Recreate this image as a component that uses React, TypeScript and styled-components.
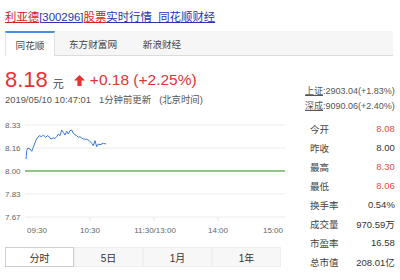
import React from "react";
import styled, { createGlobalStyle } from "styled-components";

const GlobalStyle = createGlobalStyle`
  body {
    margin: 0;
    background: #fff;
    font-family: "Liberation Sans", "Noto Sans CJK SC", sans-serif;
    color: #333;
  }
`;

const Page = styled.div`
  width: 400px;
  height: 280px;
  padding: 0 7px 0 5px;
  box-sizing: border-box;
  overflow: hidden;
`;

const Title = styled.div`
  padding-top: 8px;
  line-height: 18px;
  font-size: 11.4px;
  white-space: nowrap;
`;

const TitlePart = styled.span<{ $red?: boolean }>`
  color: ${(p) => (p.$red ? "#d42323" : "#2b32b8")};
  text-decoration: underline;
`;

const TabBar = styled.div`
  margin-top: 5px;
  height: 24px;
  display: flex;
  background: #f6f6f6;
  border-bottom: 1px solid #dcdcdc;
`;

const Tab = styled.div<{ $active?: boolean; $w: number }>`
  width: ${(p) => p.$w}px;
  box-sizing: border-box;
  display: flex;
  align-items: center;
  justify-content: center;
  font-size: 9.6px;
  color: #444;
  background: ${(p) => (p.$active ? "#fff" : "transparent")};
  border-top: 2px solid ${(p) => (p.$active ? "#4a8de0" : "transparent")};
  border-left: 1px solid ${(p) => (p.$active ? "#e2e2e2" : "transparent")};
  border-right: 1px solid ${(p) => (p.$active ? "#e2e2e2" : "transparent")};
  margin-bottom: ${(p) => (p.$active ? "-1px" : "0")};
`;

const Main = styled.div`
  display: flex;
  gap: 20px;
`;

const Left = styled.div`
  width: 280px;
  flex: none;
`;

const PriceRow = styled.div`
  margin-top: 11px;
  height: 26px;
  display: flex;
  align-items: center;
  color: #e63232;
`;

const Price = styled.span`
  font-size: 22px;
`;

const Unit = styled.span`
  font-size: 11px;
  margin: 5px 0 0 5px;
  color: #444;
`;

const Change = styled.span`
  font-size: 15.5px;
  margin-left: 5px;
`;

const Arrow = styled.svg`
  width: 11px;
  height: 11px;
  margin-left: 10px;
`;

const DateRow = styled.div`
  height: 14px;
  line-height: 14px;
  font-size: 9.4px;
  color: #555;
  white-space: nowrap;
  display: flex;
  gap: 8px;
`;

const Chart = styled.svg`
  display: block;
  width: 280px;
  height: 128px;
  margin-top: 4px;
`;

const RangeBar = styled.div`
  margin-top: 8px;
  width: 276px;
  height: 20px;
  display: flex;
  background: #f7f7f7;
`;

const RangeTab = styled.div<{ $active?: boolean }>`
  flex: 1;
  display: flex;
  align-items: center;
  justify-content: center;
  font-size: 10px;
  color: #333;
  box-sizing: border-box;
  background: ${(p) => (p.$active ? "#fff" : "transparent")};
  border: 1px solid ${(p) => (p.$active ? "#cfcfcf" : "#efefef")};
`;

const Right = styled.div`
  flex: 1;
  padding-top: 28px;
`;

const IndexLine = styled.div`
  line-height: 15px;
  font-size: 9px;
  color: #555;
  white-space: nowrap;
`;

const IndexName = styled.span`
  text-decoration: underline;
`;

const Stats = styled.div`
  margin-top: 5px;
  padding-left: 5px;
`;

const StatRow = styled.div`
  height: 19px;
  display: flex;
  align-items: center;
  justify-content: space-between;
  font-size: 9.5px;
`;

const StatLabel = styled.span`
  color: #444;
`;

const StatValue = styled.span<{ $red?: boolean }>`
  color: ${(p) => (p.$red ? "#e84a4a" : "#333")};
`;

const stats = [
  { label: "今开", value: "8.08", red: true },
  { label: "昨收", value: "8.00" },
  { label: "最高", value: "8.30", red: true },
  { label: "最低", value: "8.06", red: true },
  { label: "换手率", value: "0.54%" },
  { label: "成交量", value: "970.59万" },
  { label: "市盈率", value: "16.58" },
  { label: "总市值", value: "208.01亿" },
];

// page coords of the intraday line
const linePts: [number, number][] = [
  [26, 160], [26.7, 151.7], [28, 149], [30, 150], [31.7, 152.3], [33.3, 148.3],
  [36, 141], [37.3, 139], [39.3, 136.7], [41.7, 137.7], [43.3, 136], [45.7, 138.3],
  [47.3, 136.7], [49.3, 137.7], [50.7, 140], [53.3, 139], [55, 139.3], [56.7, 137.7],
  [58.3, 135], [60, 136.7], [61.7, 131], [63.3, 133.3], [65, 136], [66.7, 132.3],
  [68.3, 135], [70, 131.7], [71.7, 131], [73.3, 134.3], [75, 135.7], [76.7, 136.7],
  [78.3, 138.3], [80, 137.7], [81.7, 139], [83.3, 140], [86.7, 140.3], [89.3, 141.7],
  [91.7, 144.3], [93.3, 146.7], [95, 141.7], [96.7, 147.7], [98.3, 145], [100, 145.7],
  [103.3, 144.3], [106, 145],
];

const gridYs = [14, 37, 60, 83, 106];
const yLabels = ["8.33", "8.16", "8.00", "7.83", "7.67"];

const IntradayChart = () => (
  <Chart viewBox="0 0 280 128">
    {gridYs.map((y, i) => (
      <g key={y}>
        <line
          x1={20}
          x2={280}
          y1={y}
          y2={y}
          stroke={i === 2 ? "#6bb35b" : "#ececec"}
          strokeWidth={i === 2 ? 1.4 : 1}
        />
        <text x={0} y={y + 3} fontSize={8} fill="#666" fontFamily="Liberation Sans, sans-serif">
          {yLabels[i]}
        </text>
      </g>
    ))}
    {[85, 149, 213].map((x) => (
      <line key={x} x1={x} x2={x} y1={106} y2={110} stroke="#e4e4e4" />
    ))}
    <polyline
      points={linePts.map(([x, y]) => `${x - 5},${y - 112}`).join(" ")}
      fill="none"
      stroke="#3a78d4"
      strokeWidth={1}
    />
    <g fontSize={8} fill="#666" fontFamily="Liberation Sans, sans-serif">
      <text x={22} y={122}>09:30</text>
      <text x={85} y={122} textAnchor="middle">10:30</text>
      <text x={150} y={122} textAnchor="middle">11:30/13:00</text>
      <text x={213} y={122} textAnchor="middle">14:00</text>
      <text x={278} y={122} textAnchor="end">15:00</text>
    </g>
  </Chart>
);

export default function App() {
  return (
    <Page>
      <GlobalStyle />
      <Title>
        <TitlePart $red>利亚德</TitlePart>
        <TitlePart>[300296]</TitlePart>
        <TitlePart $red>股票</TitlePart>
        <TitlePart>实时行情_同花顺财经</TitlePart>
      </Title>
      <TabBar>
        <Tab $active $w={50}>同花顺</Tab>
        <Tab $w={76}>东方财富网</Tab>
        <Tab $w={62}>新浪财经</Tab>
      </TabBar>
      <Main>
        <Left>
          <PriceRow>
            <Price>8.18</Price>
            <Unit>元</Unit>
            <Arrow viewBox="0 0 11 11">
              <path d="M5.5 0 L11 5.5 L7.6 5.5 L7.6 11 L3.4 11 L3.4 5.5 L0 5.5 Z" fill="#e63232" />
            </Arrow>
            <Change>+0.18 (+2.25%)</Change>
          </PriceRow>
          <DateRow>
            <span>2019/05/10 10:47:01</span>
            <span>1分钟前更新</span>
            <span>(北京时间)</span>
          </DateRow>
          <IntradayChart />
          <RangeBar>
            <RangeTab $active>分时</RangeTab>
            <RangeTab>5日</RangeTab>
            <RangeTab>1月</RangeTab>
            <RangeTab>1年</RangeTab>
          </RangeBar>
        </Left>
        <Right>
          <IndexLine>
            <IndexName>上证</IndexName>:2903.04(+1.83%)
          </IndexLine>
          <IndexLine>
            <IndexName>深成</IndexName>:9090.06(+2.40%)
          </IndexLine>
          <Stats>
            {stats.map((s) => (
              <StatRow key={s.label}>
                <StatLabel>{s.label}</StatLabel>
                <StatValue $red={s.red}>{s.value}</StatValue>
              </StatRow>
            ))}
          </Stats>
        </Right>
      </Main>
    </Page>
  );
}
